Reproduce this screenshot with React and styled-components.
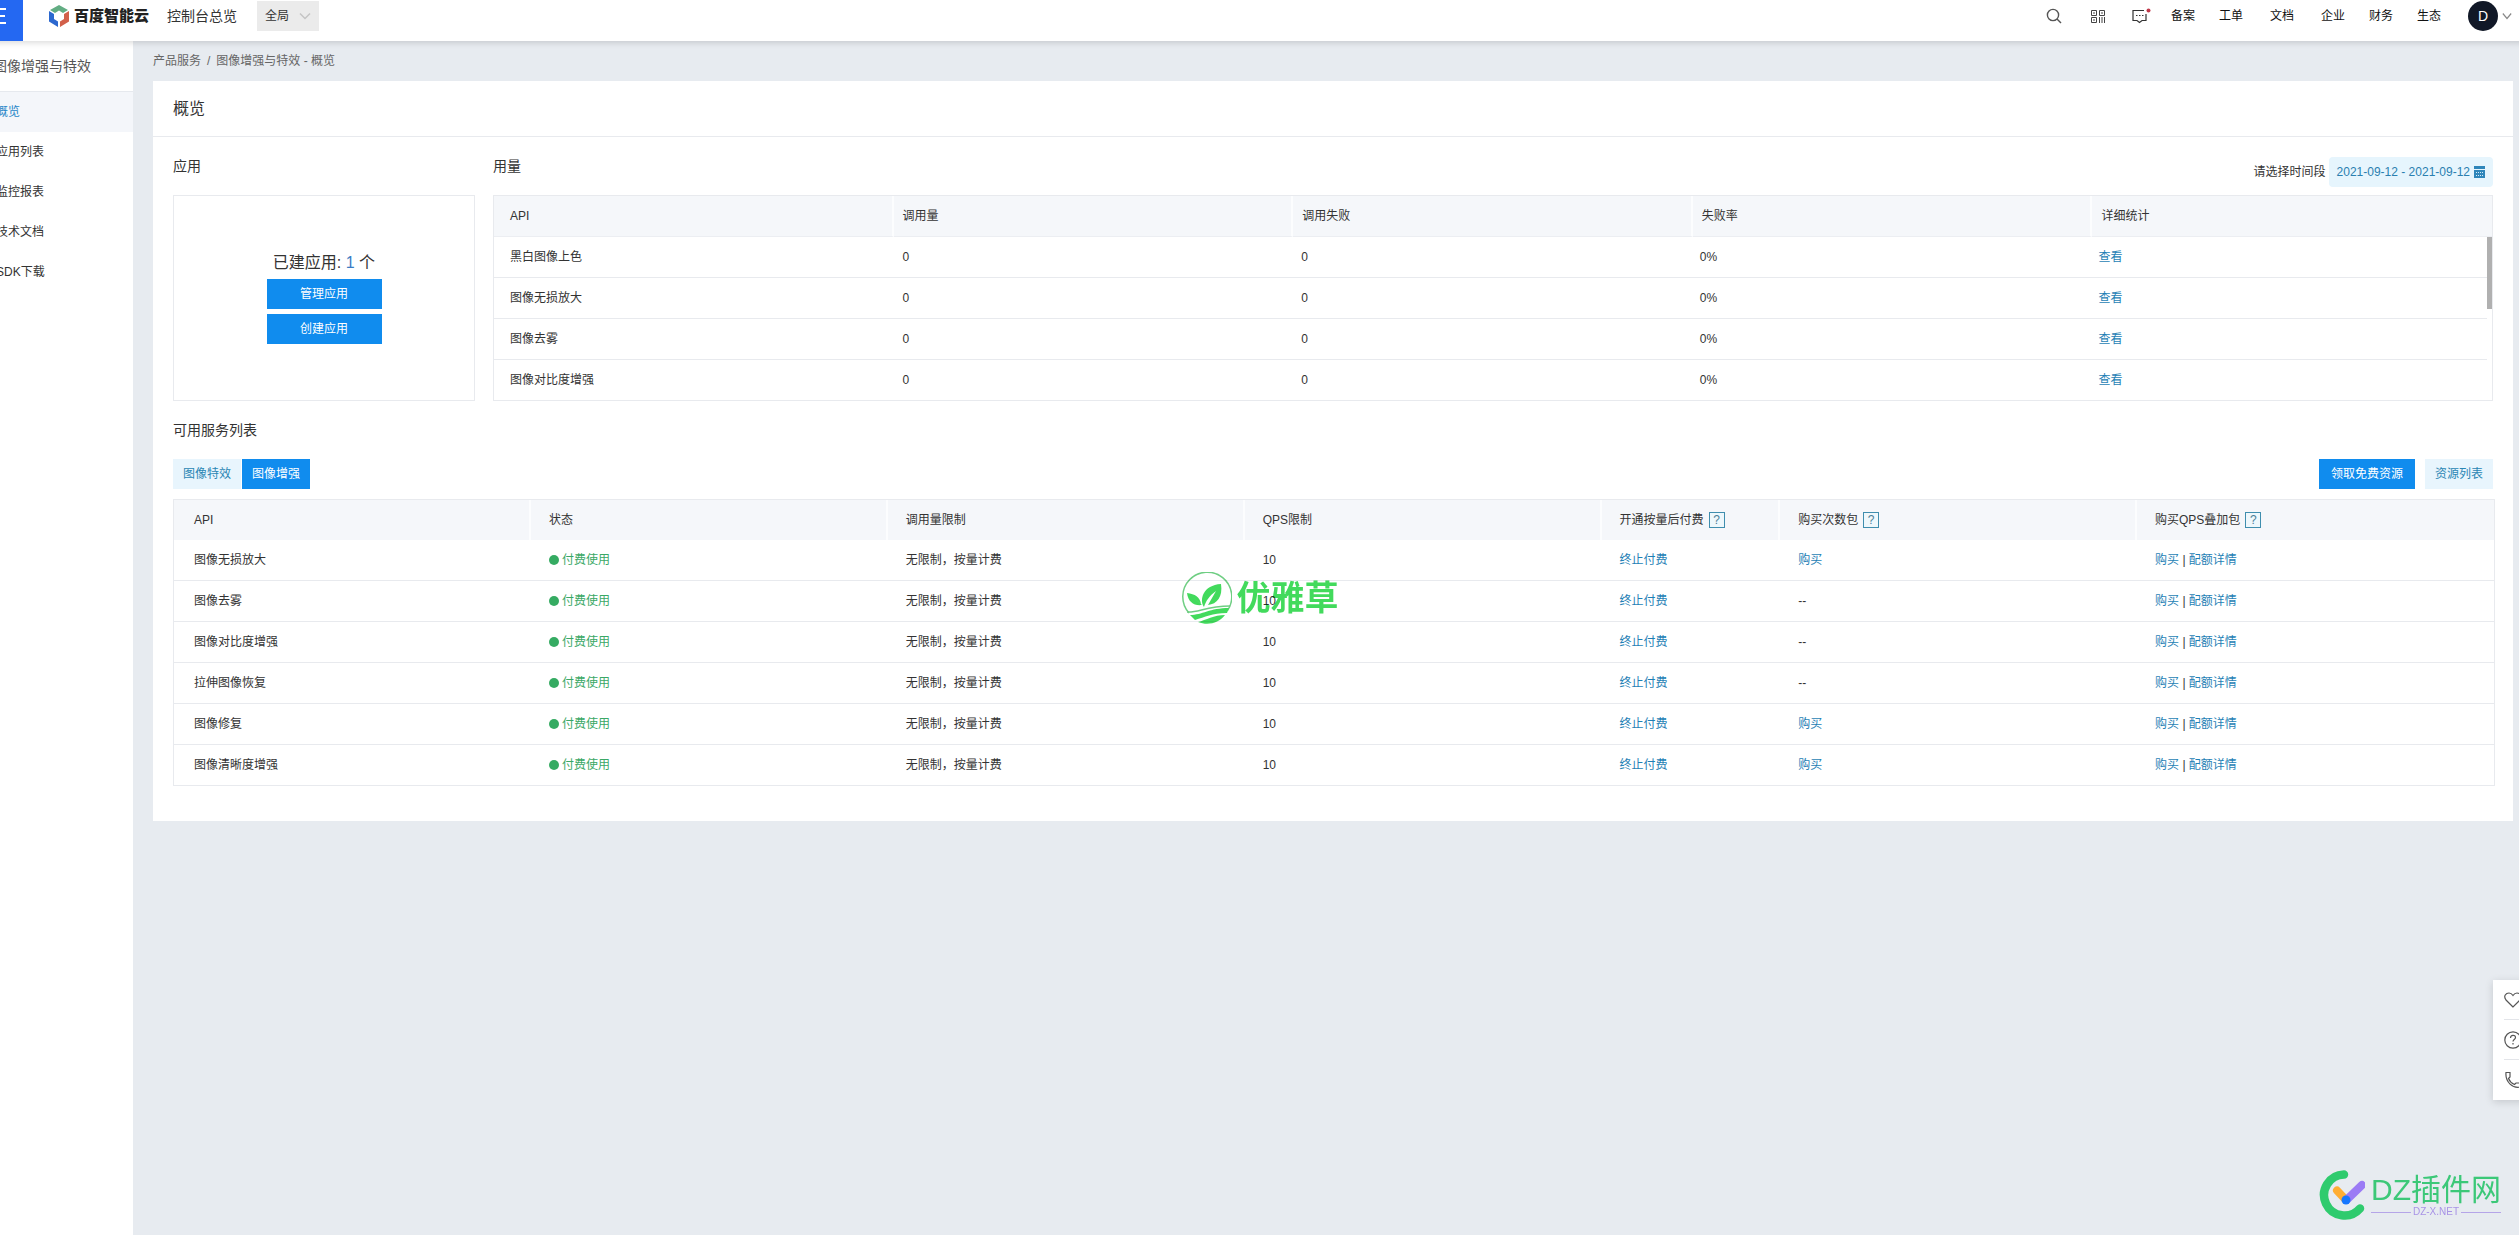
import React from 'react'
import styled, { createGlobalStyle } from 'styled-components'

const GlobalStyle = createGlobalStyle`
* {
  box-sizing: border-box;
}
body {
  margin: 0;
  overflow: hidden;
  background-color: #e7ebf0;
  color: #333;
  font-family: "Liberation Sans", "Noto Sans CJK SC", sans-serif;
  font-size: 12px;
  line-height: 20px;
}
a {
  color: #1f7fb5;
  text-decoration: none;
}
button, select {
  font: inherit;
  border: 0;
  padding: 0;
  cursor: pointer;
}
h1, h2, p, ul {
  margin: 0;
  padding: 0;
  font-weight: normal;
}
`;

/* the console is wider than the window and sits slightly scrolled */
const Page = styled.div`
display: flex;
flex-direction: column;
min-height: calc(100vh + 9px);
margin: -9px -14px 0 -27px;
`;

const TopBar = styled.header`
display: flex;
align-items: center;
height: 50px;
padding-right: 21px;
background-color: #fff;
box-shadow: 0 2px 6px rgba(0, 0, 0, 0.14);
position: relative;
z-index: 10;
`;

const MenuButton = styled.button`
display: flex;
justify-content: center;
align-items: center;
width: 50px;
height: 50px;
margin-right: 26px;
background-color: #2468f2;
`;

const Brand = styled.a`
display: flex;
align-items: center;
gap: 5px;
margin-right: 18px;
color: #222;
font-size: 15px;
font-weight: 900;
`;

const ConsoleLink = styled.a`
margin-right: 20px;
color: #333;
font-size: 14px;
`;

const RegionBox = styled.label`
display: grid;
align-items: center;
width: 62px;
height: 30px;
background-color: #ebebeb;

select, svg {
  grid-area: 1 / 1;
}
select {
  width: 100%;
  height: 30px;
  padding-left: 8px;
  appearance: none;
  background: none;
  color: #333;
}
svg {
  justify-self: end;
  margin-right: 8px;
  pointer-events: none;
}
`;

const TopTools = styled.div`
display: flex;
align-items: center;
gap: 26px;
margin-left: auto;
margin-right: 8px;
`;

const ToolButton = styled.button`
display: flex;
width: 18px;
height: 18px;
background: none;
`;

const TopLinks = styled.nav`
display: flex;
margin-right: 15px;
`;

const TopLink = styled.a`
padding: 0 ${({ $wide }) => ($wide ? '15px' : '12px')};
color: #111;
`;

const Account = styled.button`
display: flex;
align-items: center;
gap: 4px;
background: none;
`;

const Avatar = styled.span`
width: 30px;
height: 30px;
border-radius: 50%;
background-color: #111827;
color: #fff;
font-size: 14px;
line-height: 30px;
text-align: center;
`;

const Body = styled.div`
display: flex;
flex: 1;
`;

const Sidebar = styled.aside`
width: 160px;
flex-shrink: 0;
background-color: #fff;
`;

const SidebarTitle = styled.h2`
height: 51px;
padding-left: 20px;
border-bottom: 1px solid #e6e9ee;
color: #555;
font-size: 14px;
line-height: 50px;
white-space: nowrap;
`;

const SidebarLink = styled.a`
display: block;
height: 40px;
padding-left: 23px;
line-height: 40px;
color: ${({ $active }) => ($active ? '#1f86c8' : '#333')};
background-color: ${({ $active }) => ($active ? '#f4f6fa' : 'transparent')};
`;

const Main = styled.main`
flex: 1;
min-width: 0;
padding: 0 20px;
`;

const Crumbs = styled.nav`
display: flex;
align-items: center;
gap: 6px;
height: 40px;
color: #666;

a {
  color: #666;
}
`;

const Card = styled.section`
padding-bottom: 35px;
background-color: #fff;
`;

const CardTitle = styled.h1`
height: 56px;
padding-left: 20px;
border-bottom: 1px solid #e8eaee;
font-size: 16px;
line-height: 55px;
`;

const Overview = styled.div`
display: grid;
grid-template-columns: 302px minmax(0, 1fr);
column-gap: 18px;
padding: 20px 20px 0;
`;

const PanelHead = styled.div`
display: flex;
justify-content: space-between;
align-items: flex-start;
height: 30px;
margin-bottom: 8px;
`;

const PanelTitle = styled.h2`
font-size: 14px;
line-height: 18px;
`;

const AppBox = styled.div`
display: flex;
flex-direction: column;
justify-content: center;
align-items: center;
gap: 5px;
height: 206px;
border: 1px solid #e8eaee;
`;

const AppCount = styled.p`
font-size: 16px;
line-height: 22px;

a {
  color: #3b7cc4;
}
`;

const Button = styled.button`
width: ${({ $block }) => ($block ? '115px' : 'auto')};
height: 30px;
padding: 0 ${({ $roomy }) => ($roomy ? '12px' : '10px')};
line-height: 30px;
color: ${({ $light }) => ($light ? '#2a86b4' : '#fff')};
background-color: ${({ $light }) => ($light ? '#e8f5fd' : '#108cee')};
`;

const DateField = styled.div`
display: flex;
align-items: center;
gap: 3px;
`;

const DateButton = styled.button`
display: flex;
align-items: center;
gap: 4px;
height: 30px;
padding: 0 8px;
border-radius: 4px;
background-color: #e6f5fd;
color: #2a7fb0;
`;

const TableFrame = styled.div`
border: 1px solid #e8eaee;
border-bottom: 0;
`;

const Table = styled.table`
width: 100%;
table-layout: fixed;
border-collapse: separate;
border-spacing: 0;
text-align: left;
`;

const Th = styled.th`
height: ${({ $line }) => ($line ? '41px' : '40px')};
padding: 0 0 0 ${({ $pad }) => $pad};
border-right: 2px solid #fcfdfe;
border-bottom: ${({ $line }) => ($line ? '1px solid #eceef2' : '0')};
background-color: #f5f7fa;
font-weight: normal;

&:last-child {
  border-right: 0;
}
`;

const Td = styled.td`
height: 41px;
padding: 0 0 0 ${({ $pad }) => $pad};
border-bottom: 1px solid #e8eaee;
`;

const ScrollArea = styled.div`
display: flex;
`;

const ScrollTrack = styled.div`
width: 5px;
flex-shrink: 0;
border-bottom: 1px solid #e8eaee;
`;

const ScrollThumb = styled.div`
height: 72px;
background-color: #b0b0b0;
`;

const Services = styled.div`
padding: 20px 18px 0 20px;
`;

const ServiceBar = styled.div`
display: flex;
justify-content: space-between;
margin: 20px 2px 10px 0;
`;

const ButtonGroup = styled.div`
display: flex;
gap: ${({ $gap }) => $gap};
`;

const HelpMark = styled.button`
width: 16px;
height: 16px;
margin-left: 5px;
border: 1px solid #3f8eae;
background-color: #eef8fc;
color: #4c7f98;
line-height: 14px;
`;

const Status = styled.span`
display: flex;
align-items: center;
gap: 3px;
color: #3aa866;

&::before {
  content: "";
  width: 10px;
  height: 10px;
  border-radius: 50%;
  background-color: #35ab62;
}
`;

const SideTools = styled.div`
position: fixed;
right: -14px;
bottom: 135px;
width: 40px;
padding-left: 11px;
background-color: #fff;
box-shadow: 0 2px 8px rgba(0, 0, 0, 0.15);
`;

const SideTool = styled.button`
display: flex;
align-items: center;
width: 100%;
height: 40px;
border-bottom: 1px solid #e3e5e9;
background: none;

&:last-child {
  border-bottom: 0;
}
`;

const CenterMark = styled.div`
position: fixed;
top: 572px;
left: 50%;
transform: translateX(-50%);
display: flex;
align-items: center;
gap: 5px;
color: #42da5c;
font-size: 34px;
font-weight: bold;
line-height: 52px;
white-space: nowrap;
mix-blend-mode: multiply;
pointer-events: none;
z-index: 5;
`;

const CornerMark = styled.div`
position: fixed;
right: 18px;
bottom: 15px;
display: flex;
align-items: center;
gap: 6px;
color: #3cc878;
pointer-events: none;
`;

const CornerName = styled.div`
font-size: 30px;
line-height: 34px;
`;

const CornerSite = styled.div`
display: flex;
align-items: center;
gap: 2px;
color: #a893e6;
font-size: 10px;
line-height: 10px;

&::before, &::after {
  content: "";
  flex: 1;
  height: 1px;
  background-color: #b5a5e8;
}
`;

const usage = ['黑白图像上色', '图像无损放大', '图像去雾', '图像对比度增强'];

const services = [
  { name: '图像无损放大', pack: true },
  { name: '图像去雾', pack: false },
  { name: '图像对比度增强', pack: false },
  { name: '拉伸图像恢复', pack: false },
  { name: '图像修复', pack: true },
  { name: '图像清晰度增强', pack: true },
];

const serviceColumns = [
  { title: 'API' },
  { title: '状态' },
  { title: '调用量限制' },
  { title: 'QPS限制' },
  { title: '开通按量后付费', help: true, half: true },
  { title: '购买次数包', help: true },
  { title: '购买QPS叠加包', help: true },
];

const Chevron = ({ width, color }) => (
  <svg width={width} height="8" viewBox="0 0 12 8" preserveAspectRatio="none" fill="none" stroke={color} strokeWidth="1.5">
    <path d="M1 1.5l5 5 5-5" />
  </svg>
);

const BrandLogo = () => (
  <svg width="20" height="22" viewBox="0 0 20 22">
    <path d="M10 0l9 5-5 3-4-2.500L6 8 1 5z" fill="#62ad83" />
    <path d="M0 6l5 3v5l4 2.500V22l-9-5.500z" fill="#2c68cf" />
    <path d="M20 6l-5 3v5l-4 2.500V22l9-5.500z" fill="#d2604a" />
  </svg>
);

const LeafLogo = () => (
  <svg width="51" height="52" viewBox="0 0 51 52" fill="#42da5c">
    <path d="M8 41A24.500 24.500 0 1 1 46.500 38.500" fill="none" stroke="#6fce83" strokeWidth="1.500" />
    <path d="M23 35C18 28 22 13 40 12c2 13-4 20-13 21l8-14c-7 5-10 10-12 16z" />
    <path d="M21 33c-8 1-14-3-15-12 8 1 13 4 14 11l-8-7z" />
    <path d="M6 40C17 41 25 34 49 34" fill="none" stroke="#6fce83" strokeWidth="1.500" />
    <path d="M9 43c12 0 20-7 39-7l-2 5c-15 0-22 4-32 7z" />
    <path d="M17 50c8-2 16-7 27-7-6 8-17 11-27 7z" />
  </svg>
);

const CheckLogo = () => (
  <svg width="46" height="50" viewBox="0 0 46 50" fill="none" strokeLinecap="round">
    <path d="M25 4.500A20.500 20.500 0 1 0 41 38.500" stroke="#2fcb6e" strokeWidth="8.500" />
    <path d="M18 20.500l8.500 9" stroke="#ffad33" strokeWidth="8" />
    <path d="M28 29.500L43 15" stroke="#9b7bf5" strokeWidth="8" />
    <circle cx="27" cy="30" r="4.500" fill="#1677ff" />
  </svg>
);

const Help = ({ title }) => <HelpMark aria-label={`${title}说明`}>?</HelpMark>;

const Header = () => (
  <TopBar>
    <MenuButton aria-label="菜单">
      <svg width="16" height="16" viewBox="0 0 16 16" stroke="#fff" strokeWidth="2">
        <path d="M0 1h16M0 8h15M0 15h16" />
      </svg>
    </MenuButton>
    <Brand href="#home">
      <BrandLogo />
      百度智能云
    </Brand>
    <ConsoleLink href="#console">控制台总览</ConsoleLink>
    <RegionBox>
      <select aria-label="区域" defaultValue="all">
        <option value="all">全局</option>
      </select>
      <Chevron width="12" color="#c4c4c4" />
    </RegionBox>

    <TopTools>
      <ToolButton aria-label="搜索">
        <svg width="18" height="18" viewBox="0 0 18 18" fill="none" stroke="#555" strokeWidth="1.4">
          <circle cx="8" cy="8" r="5.600" />
          <path d="M12 12l4 4" />
        </svg>
      </ToolButton>
      <ToolButton aria-label="应用">
        <svg width="18" height="18" viewBox="0 0 18 18" fill="none" stroke="#444">
          <path d="M2.500 3.500h5v5h-5zM10.500 3.500h5v5h-5zM2.500 10.500h5v5h-5zM10.500 10v6M13 10v6M15.500 10v6M4 6h2M12 6h2M4 13h2" />
        </svg>
      </ToolButton>
      <ToolButton aria-label="消息">
        <svg width="18" height="18" viewBox="0 0 18 18" overflow="visible" fill="none" stroke="#333" strokeWidth="1.200">
          <path d="M11 3.500H0v10h4l2.500 2 2.500-2h4V7" />
          <path d="M3 8.500h1.500M6 8.500h1.500M9 8.500h1.500" />
          <circle cx="15.500" cy="3.500" r="2" fill="#c0394b" stroke="none" />
        </svg>
      </ToolButton>
    </TopTools>
    <TopLinks>
      <TopLink href="#beian">备案</TopLink>
      <TopLink href="#ticket">工单</TopLink>
      <TopLink href="#docs" $wide>文档</TopLink>
      <TopLink href="#company">企业</TopLink>
      <TopLink href="#finance">财务</TopLink>
      <TopLink href="#ecology">生态</TopLink>
    </TopLinks>
    <Account aria-label="账号">
      <Avatar>D</Avatar>
      <Chevron width="10" color="#888" />
    </Account>
  </TopBar>
);

const UsageTable = () => (
  <TableFrame>
    <Table>
      <thead>
        <tr>
          {['API', '调用量', '调用失败', '失败率', '详细统计'].map((title, i) => (
            <Th key={title} $line $pad={i === 0 ? '16px' : '9px'}>{title}</Th>
          ))}
        </tr>
      </thead>
    </Table>
    <ScrollArea>
      <Table>
        <tbody>
          {usage.map((name) => (
            <tr key={name}>
              <Td $pad="16px">{name}</Td>
              <Td $pad="10px">0</Td>
              <Td $pad="10px">0</Td>
              <Td $pad="10px">0%</Td>
              <Td $pad="10px"><a href="#detail">查看</a></Td>
            </tr>
          ))}
        </tbody>
      </Table>
      <ScrollTrack>
        <ScrollThumb />
      </ScrollTrack>
    </ScrollArea>
  </TableFrame>
);

const ServiceTable = () => (
  <TableFrame>
    <Table>
      <colgroup>
        {serviceColumns.map((col) => (
          <col key={col.title} width={col.half ? '7.7%' : '15.38%'} />
        ))}
      </colgroup>
      <thead>
        <tr>
          {serviceColumns.map((col, i) => (
            <Th key={col.title} $pad={i === 0 ? '20px' : '18px'}>
              {col.title}
              {col.help && <Help title={col.title} />}
            </Th>
          ))}
        </tr>
      </thead>
      <tbody>
        {services.map((item) => (
          <tr key={item.name}>
            <Td $pad="20px">{item.name}</Td>
            <Td $pad="18px"><Status>付费使用</Status></Td>
            <Td $pad="18px">无限制，按量计费</Td>
            <Td $pad="18px">10</Td>
            <Td $pad="18px"><a href="#stop">终止付费</a></Td>
            <Td $pad="18px">{item.pack ? <a href="#buy">购买</a> : '--'}</Td>
            <Td $pad="18px">
              <a href="#buy-qps">购买</a> | <a href="#quota">配额详情</a>
            </Td>
          </tr>
        ))}
      </tbody>
    </Table>
  </TableFrame>
);

const App = () => {
  const [tab, setTab] = React.useState('图像增强');
  return (
    <>
      <GlobalStyle />
      <Page>
        <Header />
        <Body>
          <Sidebar>
            <SidebarTitle>图像增强与特效</SidebarTitle>
            <nav>
              <SidebarLink href="#overview" $active>概览</SidebarLink>
              <SidebarLink href="#apps">应用列表</SidebarLink>
              <SidebarLink href="#monitor">监控报表</SidebarLink>
              <SidebarLink href="#tech">技术文档</SidebarLink>
              <SidebarLink href="#sdk">SDK下载</SidebarLink>
            </nav>
          </Sidebar>
          <Main>
            <Crumbs>
              <a href="#products">产品服务</a>
              <span>/</span>
              <span>图像增强与特效 - 概览</span>
            </Crumbs>
            <Card>
              <CardTitle>概览</CardTitle>
              <Overview>
                <div>
                  <PanelHead>
                    <PanelTitle>应用</PanelTitle>
                  </PanelHead>
                  <AppBox>
                    <AppCount>已建应用: <a href="#apps">1</a> 个</AppCount>
                    <Button $block>管理应用</Button>
                    <Button $block>创建应用</Button>
                  </AppBox>
                </div>
                <div>
                  <PanelHead>
                    <PanelTitle>用量</PanelTitle>
                    <DateField>
                      <label htmlFor="range">请选择时间段</label>
                      <DateButton id="range">
                        2021-09-12 - 2021-09-12
                        <svg width="11" height="12" viewBox="0 0 11 12">
                          <path d="M0 0h11v3H0zM0 4h11v8H0z" fill="#2f86ba" />
                          <path d="M2 6.500h7M2 9.500h7" stroke="#d5ecf8" strokeDasharray="1 1" />
                        </svg>
                      </DateButton>
                    </DateField>
                  </PanelHead>
                  <UsageTable />
                </div>
              </Overview>
              <Services>
                <PanelTitle>可用服务列表</PanelTitle>
                <ServiceBar>
                  <ButtonGroup $gap="1px">
                    {['图像特效', '图像增强'].map((name) => (
                      <Button key={name} $light={tab !== name} onClick={() => setTab(name)}>{name}</Button>
                    ))}
                  </ButtonGroup>
                  <ButtonGroup $gap="10px">
                    <Button $roomy>领取免费资源</Button>
                    <Button $light>资源列表</Button>
                  </ButtonGroup>
                </ServiceBar>
                <ServiceTable />
              </Services>
            </Card>
          </Main>
        </Body>
      </Page>

      <SideTools>
        <SideTool aria-label="收藏">
          <svg width="18" height="18" viewBox="0 0 18 18" fill="none" stroke="#555" strokeWidth="1.200">
            <path d="M9 16L2 9C-1 5 2 2 5 2c2 0 3 1 4 2.500C10 3 11 2 13 2c3 0 6 3 3 7z" />
          </svg>
        </SideTool>
        <SideTool aria-label="帮助">
          <svg width="18" height="18" viewBox="0 0 18 18" fill="none" stroke="#555" strokeWidth="1.200">
            <circle cx="9" cy="9" r="8.200" />
            <path d="M6.500 7c0-3.500 5-3.500 5-.500 0 2-2.500 2-2.500 4M9 12v1.500" />
          </svg>
        </SideTool>
        <SideTool aria-label="电话">
          <svg width="18" height="18" viewBox="0 0 18 18" fill="none" stroke="#555" strokeWidth="1.200">
            <path d="M2 1.500h4v4.500L4.500 7.500c1 2.500 3.500 5 6 6L12 12h4.500v4C9 18 1 11 2 1.500z" />
          </svg>
        </SideTool>
      </SideTools>

      <CenterMark>
        <LeafLogo />
        优雅草
      </CenterMark>
      <CornerMark>
        <CheckLogo />
        <div>
          <CornerName>DZ插件网</CornerName>
          <CornerSite>DZ-X.NET</CornerSite>
        </div>
      </CornerMark>
    </>
  );
}

export default App
